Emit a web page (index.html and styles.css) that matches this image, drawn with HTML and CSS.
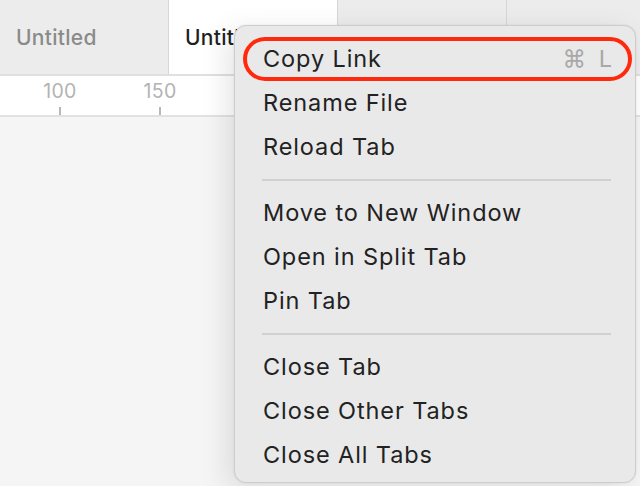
FILE: index.html
```html
<!DOCTYPE html>
<html>
<head>
<meta charset="utf-8">
<link rel="stylesheet" href="styles.css">
</head>
<body>
<div class="window">
  <div class="tabbar">
    <div class="tab">Untitled</div>
    <div class="tab active">Untitled</div>
    <div class="tab"></div>
    <div class="tab last"></div>
  </div>
  <div class="ruler">
    <div class="mark m100"><span class="num">100</span><span class="tick"></span></div>
    <div class="mark m150"><span class="num">150</span><span class="tick"></span></div>
  </div>
  <div class="canvas"></div>

  <div class="menu">
    <div class="item highlighted"><span>Copy Link</span><span class="shortcut">⌘ L</span></div>
    <div class="item">Rename File</div>
    <div class="item">Reload Tab</div>
    <div class="sep"></div>
    <div class="item">Move to New Window</div>
    <div class="item">Open in Split Tab</div>
    <div class="item">Pin Tab</div>
    <div class="sep"></div>
    <div class="item">Close Tab</div>
    <div class="item">Close Other Tabs</div>
    <div class="item">Close All Tabs</div>
  </div>
</div>
</body>
</html>
```

FILE: styles.css
```css
* { box-sizing: border-box; }
html, body { margin: 0; padding: 0; }
body {
  width: 640px;
  height: 486px;
  overflow: hidden;
  font-family: Inter, "Noto Sans", sans-serif;
  background: #f5f5f5;
}
.window {
  position: relative;
  width: 640px;
  height: 486px;
  display: flex;
  flex-direction: column;
}
.tabbar {
  display: flex;
  height: 76px;
  border-bottom: 2px solid #e0e0e0;
  background: #ececec;
}
.tab {
  width: 169px;
  flex: none;
  border-right: 1px solid #d6d6d6;
  display: flex;
  align-items: center;
  padding-left: 16px;
  font-size: 21px;
  font-weight: 500;
  color: #8a8a8a;
  white-space: nowrap;
  overflow: hidden;
  letter-spacing: 0.3px;
}
.tab.active {
  background: #ffffff;
  color: #1f1f1f;
}
.tab.last { flex: 1; border-right: none; }
.ruler {
  height: 41px;
  background: #ffffff;
  border-bottom: 2px solid #e2e2e2;
  display: flex;
  padding-left: 35px;
}
.mark {
  width: 50px;
  display: flex;
  flex-direction: column;
  align-items: center;
  margin-right: 50px;
}
.num {
  font-size: 19.5px;
  color: #b3b3b3;
  line-height: 20px;
  margin-top: 5px;
  letter-spacing: 0.3px;
}
.tick {
  width: 2px;
  height: 8px;
  background: #b8b8b8;
  margin-top: auto;
}
.canvas { flex: 1; background: #f5f5f5; }

.menu {
  position: absolute;
  left: 234px;
  top: 25px;
  width: 402px;
  height: 458px;
  background: #e9e9e9;
  border: 1px solid #cdcdcd;
  border-radius: 12px;
  box-shadow: -8px 6px 28px rgba(0,0,0,0.10), 0 0 2px rgba(0,0,0,0.1);
  padding: 11px 8px 0 8px;
}
.item {
  height: 44px;
  display: flex;
  align-items: center;
  justify-content: space-between;
  padding-left: 20px;
  padding-right: 14px;
  padding-bottom: 1px;
  font-size: 23.5px;
  color: #222222;
  letter-spacing: 0.9px;
}
.item.highlighted {
  border: 4px solid #ff2a0e;
  border-radius: 22px;
  padding-left: 16px;
  padding-right: 16px;
  margin-right: -5px;
}
.shortcut {
  color: #a8a8a8;
  letter-spacing: 3px;
  margin-right: -3px;
}
.sep {
  height: 22px;
  display: flex;
  align-items: center;
  padding: 0 16px 0 19px;
}
.sep::before {
  content: "";
  flex: 1;
  height: 2px;
  background: #d0d0d0;
}
```
